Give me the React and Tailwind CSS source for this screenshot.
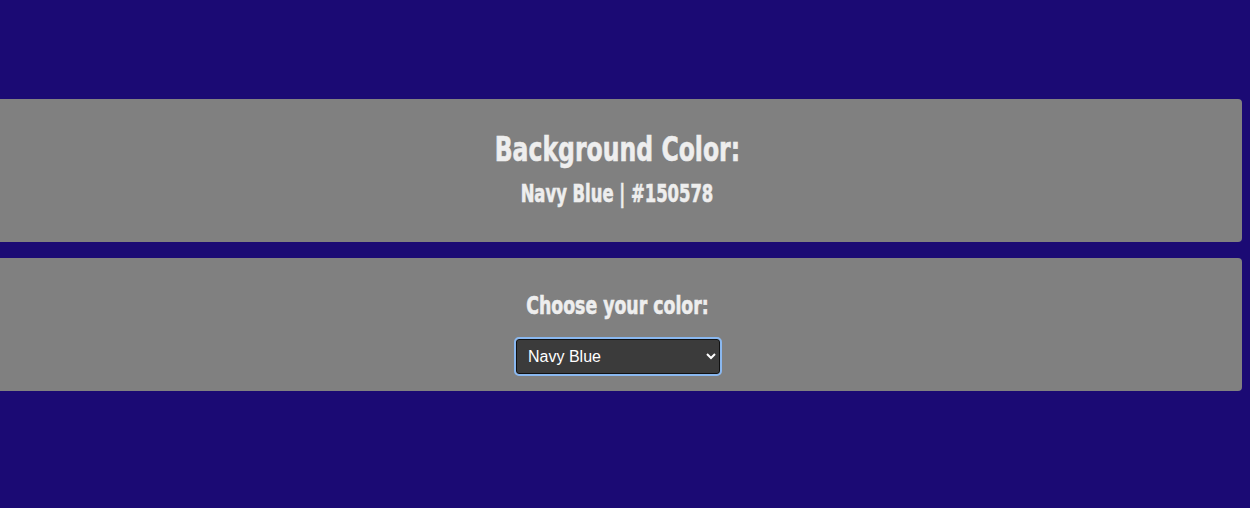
import { useState } from 'react';

const colors = [
  { name: 'Navy Blue', hex: '#150578' },
  { name: 'Crimson', hex: '#dc143c' },
  { name: 'Forest Green', hex: '#228b22' },
  { name: 'Goldenrod', hex: '#daa520' },
];

export default function App() {
  const [color, setColor] = useState(colors[0]);

  return (
    <div className="min-h-[508px] w-full overflow-hidden bg-[#1b0a74] pt-[99px] font-['Impact','Liberation_Sans_Narrow','DejaVu_Sans_Condensed',sans-serif]">
      {/* Current color */}
      <div className="-ml-2 flex h-[143px] w-full flex-col items-center gap-3 rounded-[4px] bg-[#808080] pt-8 text-[#eeeeee] [-webkit-text-stroke:0.6px_#eeeeee]">
        <h1 className="scale-x-[0.77] whitespace-nowrap text-[34px] font-bold leading-[36px]">Background Color:</h1>
        <h2 className="scale-x-[0.73] whitespace-nowrap text-[25px] font-bold leading-[30px]">
          {color.name} | {color.hex}
        </h2>
      </div>

      {/* Picker */}
      <div className="-ml-2 mt-4 flex h-[133px] w-full flex-col items-center gap-[18px] rounded-[4px] bg-[#808080] pt-[33px] text-[#eeeeee]">
        <h2 className="scale-x-[0.77] whitespace-nowrap text-[25px] font-bold leading-[30px] [-webkit-text-stroke:0.6px_#eeeeee]">
          Choose your color:
        </h2>
        <select
          value={color.name}
          onChange={(e) => setColor(colors.find((c) => c.name === e.target.value))}
          className="ml-0.5 h-[35px] w-[204px] rounded-[3px] border border-[#111] bg-[#3b3b3b] pl-[7px] font-['Liberation_Sans',Arial,sans-serif] text-[16px] text-white outline-2 outline-offset-0 outline-[#8ab8f0]"
        >
          {colors.map((c) => (
            <option key={c.name} value={c.name}>
              {c.name}
            </option>
          ))}
        </select>
      </div>
    </div>
  );
}
